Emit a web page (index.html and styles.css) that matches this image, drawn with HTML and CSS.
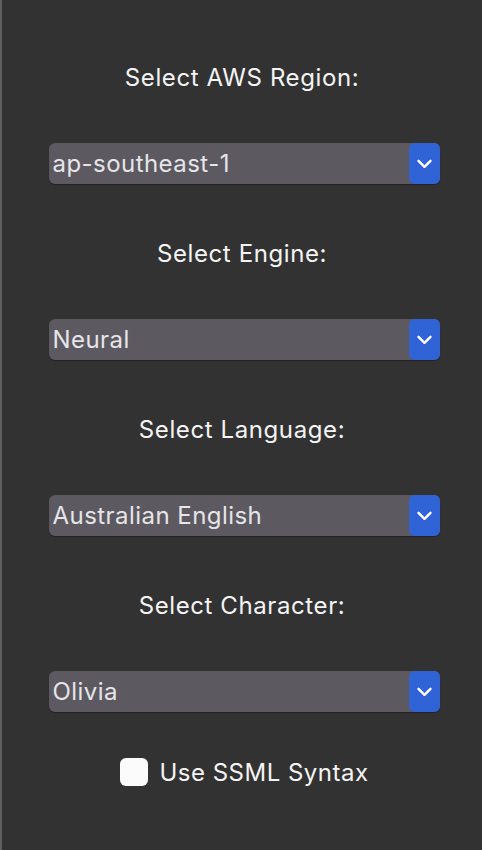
FILE: index.html
```html
<!DOCTYPE html>
<html>
<head>
<meta charset="utf-8">
<link rel="stylesheet" href="styles.css">
</head>
<body>
<div class="panel">
  <div class="field">
    <div class="label">Select AWS Region:</div>
    <div class="select"><span class="value">ap-southeast-1</span><span class="arrow"><svg width="15" height="10" viewBox="0 0 15 10"><path d="M1.5 1.8 L7.5 7.8 L13.5 1.8" fill="none" stroke="#fff" stroke-width="2.4" stroke-linecap="round" stroke-linejoin="round"/></svg></span></div>
  </div>
  <div class="field">
    <div class="label">Select Engine:</div>
    <div class="select"><span class="value">Neural</span><span class="arrow"><svg width="15" height="10" viewBox="0 0 15 10"><path d="M1.5 1.8 L7.5 7.8 L13.5 1.8" fill="none" stroke="#fff" stroke-width="2.4" stroke-linecap="round" stroke-linejoin="round"/></svg></span></div>
  </div>
  <div class="field">
    <div class="label">Select Language:</div>
    <div class="select"><span class="value">Australian English</span><span class="arrow"><svg width="15" height="10" viewBox="0 0 15 10"><path d="M1.5 1.8 L7.5 7.8 L13.5 1.8" fill="none" stroke="#fff" stroke-width="2.4" stroke-linecap="round" stroke-linejoin="round"/></svg></span></div>
  </div>
  <div class="field">
    <div class="label">Select Character:</div>
    <div class="select"><span class="value">Olivia</span><span class="arrow"><svg width="15" height="10" viewBox="0 0 15 10"><path d="M1.5 1.8 L7.5 7.8 L13.5 1.8" fill="none" stroke="#fff" stroke-width="2.4" stroke-linecap="round" stroke-linejoin="round"/></svg></span></div>
  </div>
  <div class="check-row">
    <span class="box"></span>
    <span class="check-label">Use SSML Syntax</span>
  </div>
</div>
</body>
</html>
```
FILE: styles.css
```css
html, body {
  margin: 0;
  padding: 0;
  height: 100%;
  background: #323232;
}
body {
  border-left: 2px solid #5f5f5f;
  box-sizing: border-box;
  font-family: Inter, "Noto Sans", sans-serif;
}
.panel {
  display: flex;
  flex-direction: column;
  align-items: center;
  padding-top: 63px;
}
.field {
  display: flex;
  flex-direction: column;
  align-items: center;
  margin-bottom: 55px;
}
.label {
  color: #f4f4f4;
  font-size: 24px;
  letter-spacing: 0.6px;
  line-height: 30px;
  height: 30px;
  margin-bottom: 50px;
}
.select {
  width: 391px;
  height: 41px;
  margin-left: 4px;
  box-sizing: border-box;
  background: #5c5961;
  border-radius: 6px;
  display: flex;
  align-items: center;
  justify-content: space-between;
  box-shadow: 0 1px 1px rgba(0,0,0,0.35);
}
.value {
  color: #e6e5e8;
  font-size: 24px;
  letter-spacing: 0.45px;
  padding-left: 4px;
}
.arrow {
  width: 31px;
  height: 41px;
  background: #2f63d6;
  border-radius: 6px;
  display: flex;
  align-items: center;
  justify-content: center;
}
.check-row {
  display: flex;
  align-items: center;
  gap: 11px;
  margin-top: -10px;
  margin-left: 5px;
  height: 30px;
}
.box {
  width: 28px;
  height: 28px;
  background: #fbfbfb;
  border-radius: 6px;
}
.check-label {
  color: #f4f4f4;
  font-size: 24px;
  letter-spacing: 0.5px;
}
```
